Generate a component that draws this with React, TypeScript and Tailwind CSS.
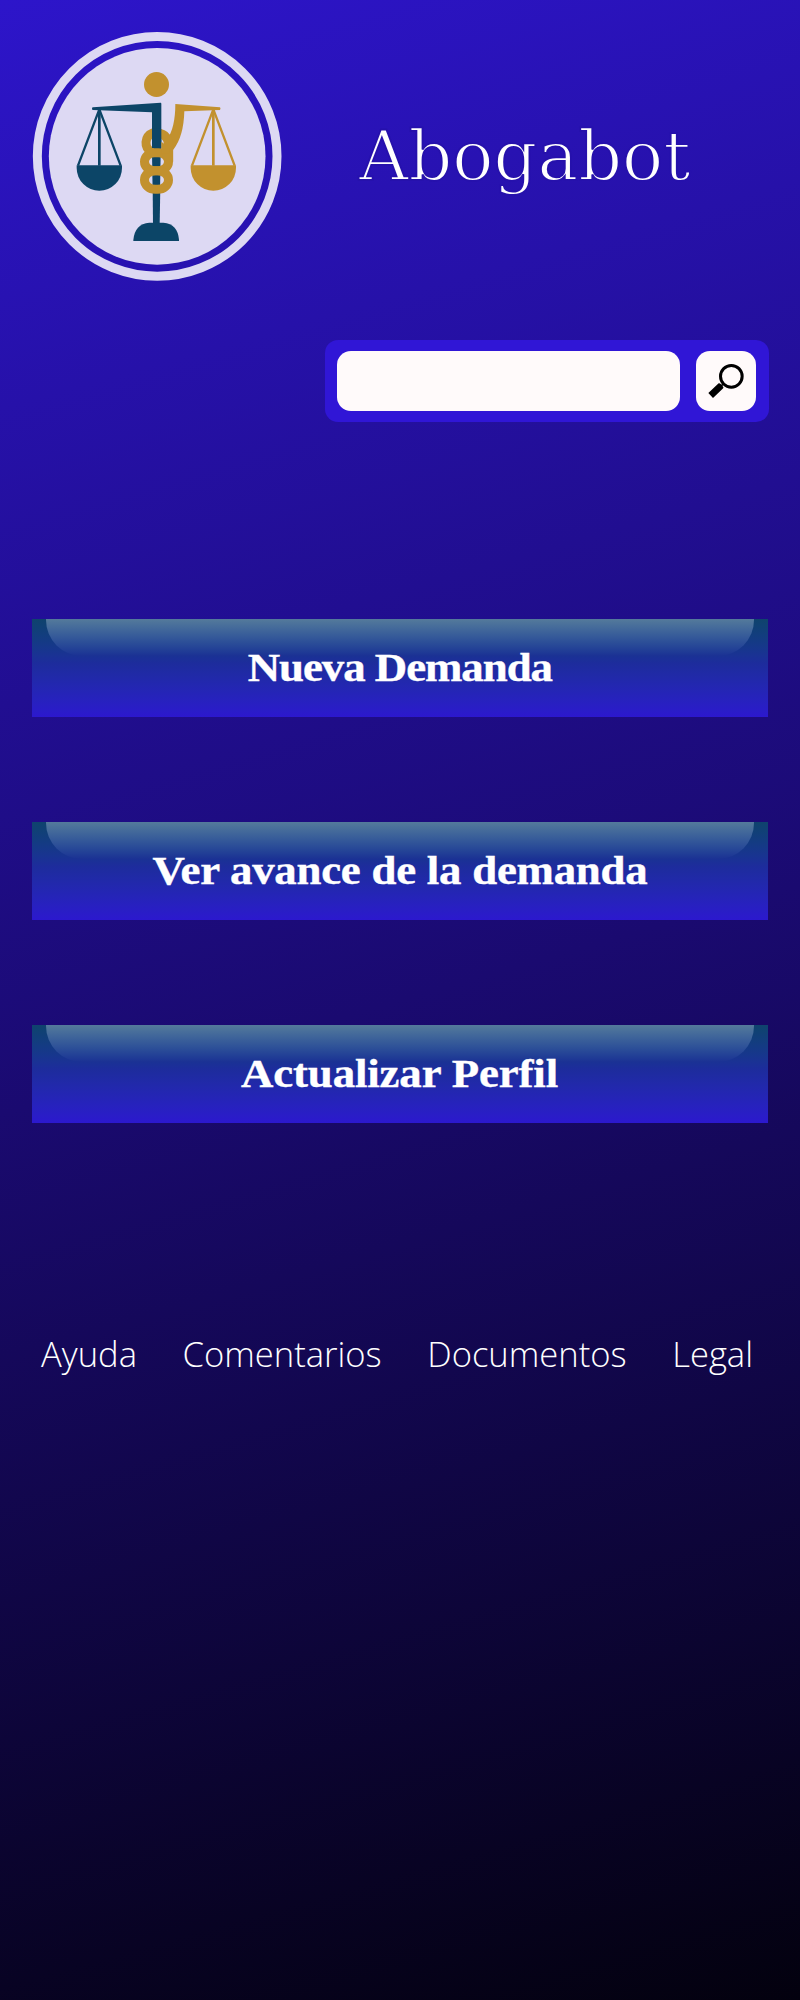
import React from "react";

const NAVY = "#0c4567";
const GOLD = "#c2912e";

function Scale({ cx, color }: { cx: number; color: string }) {
  return (
    <g>
      <path d={`M${cx} 268L${cx - 64} 437M${cx} 268L${cx + 64} 437`} stroke={color} strokeWidth="7" fill="none" />
      <path d={`M${cx} 262V437`} stroke={color} strokeWidth="8" />
      <path d={`M${cx - 68} 436H${cx + 68}V444A68 68 0 0 1 ${cx - 68} 444Z`} fill={color} />
    </g>
  );
}

function Logo() {
  return (
    <svg className="h-[250px] w-[250px] shrink-0" viewBox="36 33 750 750" role="img">
      <circle cx="411.500" cy="409" r="359.5" fill="none" stroke="#ddd9f3" strokeWidth="27" />
      <circle cx="411.500" cy="409" r="325" fill="#ddd9f3" />
      <circle cx="409.5" cy="193.500" r="37.500" fill={GOLD} />
      <Scale cx={238} color={NAVY} />
      <Scale cx={580} color={GOLD} />
      <path d="M219 262L422 248Q424 248 424 252V400H396V277L219 270Q216 270 216 266T219 262Z" fill={NAVY} />
      <path d="M466 252L600 262Q603 266 600 270L493 274Q491 350 460 389L440 360Q466 325 466 252Z" fill={GOLD} />
      <path d="M398 500H421L419 612H399Z" fill={NAVY} />
      <path d="M396 400H422L420 520H398Z" fill={NAVY} />
      <g fill="none" stroke={GOLD} strokeWidth="27">
        <path d="M400 338A36 33 0 0 0 396 397" />
        <path d="M420 340Q436 344 442 358Q446 368 446 378V425" />
        <rect x="373.500" y="398.500" width="72" height="54" rx="30" />
        <rect x="373.500" y="452" width="72" height="56" rx="32" />
      </g>
      <path d="M396 325Q410 323 424 327V384H396Z" fill={NAVY} />
      <path d="M424 365L448 382V400H424Z" fill={GOLD} />
      <path d="M340 663V660Q344 612 388 608H430Q474 612 477 660V663Z" fill={NAVY} />
    </svg>
  );
}

function MenuButton({ label, text }: { label: string; text: string }) {
  return (
    <button className="relative flex h-[98px] w-[736px] items-center justify-center bg-linear-to-b from-[#0f436d] via-[#1d2c9c] via-45% to-[#2c18ce]">
      <span className="absolute top-0 left-[13.500px] h-[37px] w-[708px] rounded-b-[36px] bg-linear-to-b from-[#547a9b] to-[#1b3194]" />
      <span className={`relative scale-x-[1.12] whitespace-nowrap font-['Liberation_Serif',serif] text-[40px] font-bold leading-[48px] text-white [-webkit-text-stroke:0.4px_white] ${text}`}>
        {label}
      </span>
    </button>
  );
}

export default function App() {
  return (
    <main className="h-[2000px] w-[800px] overflow-hidden bg-[linear-gradient(164deg,#2d15ca_0%,#1a0a70_50%,#03010e_100%)] px-8 pt-[31px] font-['Open_Sans',sans-serif] text-white">
      <header className="flex h-[250px] items-center">
        <Logo />
        <h1 className="ml-[77px] whitespace-nowrap font-['DejaVu_Serif',serif] text-[68.500px] leading-[80px] [-webkit-text-stroke:1.9px_#2611ac]">
          Abogabot
        </h1>
      </header>

      <form className="mt-[59px] ml-[292.500px] flex h-[82px] w-[444.500px] items-center justify-between rounded-[13px] bg-[#3016d6] pr-[13px] pl-[12.500px]">
        <input aria-label="Buscar" className="h-[60px] w-[343px] rounded-[14px] bg-[#fffafa]" />
        <button type="button" aria-label="Buscar" className="h-[60px] w-[60px] rounded-[14px] bg-[#fffafa]">
          <svg viewBox="0 0 180 180" className="h-full w-full">
            <circle cx="106" cy="76" r="32.500" fill="none" stroke="#000" strokeWidth="9" />
            <path d="M37 126L68 97Q71 96 74 99L82 108Q83 111 80 113L51 141Z" fill="#000" />
            <path d="M74 106L83 98" stroke="#000" strokeWidth="5" />
          </svg>
        </button>
      </form>

      <nav className="mt-[196.500px] flex flex-col gap-[105px]">
        <MenuButton label="Nueva Demanda" text="tracking-[-0.900px]" />
        <MenuButton label="Ver avance de la demanda" text="tracking-[-0.200px]" />
        <MenuButton label="Actualizar Perfil" text="tracking-[-0.100px]" />
      </nav>

      <footer className="mt-[208.500px] flex justify-between pr-[15px] pl-[9px] text-[34.600px] font-light leading-[46px]">
        <a>Ayuda</a>
        <a>Comentarios</a>
        <a>Documentos</a>
        <a>Legal</a>
      </footer>
    </main>
  );
}
